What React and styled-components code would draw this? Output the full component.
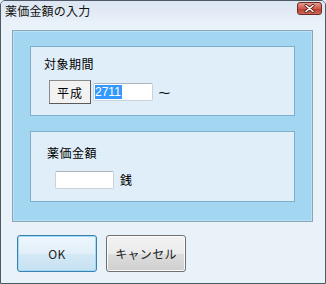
import React from "react";
import styled, { createGlobalStyle } from "styled-components";

const Global = createGlobalStyle`
  html, body { margin: 0; padding: 0; background: #eaf2f9; }
  body { font-family: "Noto Sans CJK JP", "Noto Sans", sans-serif; font-size: 12px; color: #000; }
  * { box-sizing: border-box; }
`;

const Window = styled.div`
  width: 326px;
  height: 284px;
  border: 1px solid #4d5a66;
  border-radius: 5px 5px 0 0;
  background: #eaf2f9;
  display: flex;
  flex-direction: column;
  overflow: hidden;
`;

const TitleBar = styled.div`
  height: 21px;
  flex: none;
  display: flex;
  align-items: center;
  justify-content: space-between;
  padding: 0 3px 0 4px;
  background: linear-gradient(#dbe6f2, #e3ebf5 60%, #e8f0f8);
  font-size: 12px;
  line-height: 14px;
  color: #111;
`;

const Title = styled.span`
  margin-top: -1px;
  letter-spacing: 0.2px;
`;

const CloseButton = styled.div`
  width: 25px;
  height: 13px;
  margin-top: -6px;
  border: 1px solid #6e2a27;
  border-radius: 3px;
  background: linear-gradient(#e59a8f, #cf5a4e 50%, #b93a2e 52%, #cc6a58);
  display: flex;
  align-items: center;
  justify-content: center;
`;

const Body = styled.div`
  flex: 1;
  padding: 8px 12px 0 11px;
  display: flex;
  flex-direction: column;
`;

const Panel = styled.div`
  height: 192px;
  border: 1px solid #8aa6b8;
  box-shadow: inset 0 0 0 1px #b7e2f6;
  background: #a2d6f1;
  padding: 15px 17px 0 17px;
  display: flex;
  flex-direction: column;
  gap: 15px;
`;

const Group = styled.div`
  height: ${(p) => p.$h}px;
  border: 1px solid #7faecb;
  background: #dfeef8;
  padding: ${(p) => p.$pad};
  display: flex;
  flex-direction: column;
`;

const Label = styled.div`
  line-height: 14px;
  font-size: 12px;
  letter-spacing: 0.5px;
`;

const Row = styled.div`
  display: flex;
  align-items: center;
  margin-top: ${(p) => p.$mt}px;
  padding-left: ${(p) => p.$pl}px;
`;

const EraButton = styled.div`
  width: 42px;
  height: 24px;
  border: 1px solid #5b5b5b;
  border-top-color: #8a8a8a;
  border-left-color: #8a8a8a;
  background: #f2f2f2;
  display: flex;
  align-items: center;
  justify-content: center;
  letter-spacing: 1px;
`;

const Input = styled.div`
  width: ${(p) => p.$w}px;
  height: 18px;
  margin-left: ${(p) => p.$ml}px;
  border: 1px solid #c9d3db;
  border-top-color: #abb5be;
  border-radius: 2px;
  background: #fff;
  display: flex;
  align-items: center;
  padding-left: 1px;
`;

const Selected = styled.span`
  background: #3399ff;
  color: #fff;
  font-family: "Liberation Sans", sans-serif;
  font-size: 12px;
  line-height: 14px;
  padding: 0 1px 0 0;
`;

const Suffix = styled.span`
  margin-left: ${(p) => p.$ml}px;
  font-size: 12px;
  line-height: 14px;
`;

const Tilde = styled.span`
  margin-left: 7px;
  margin-top: 2px;
  font-family: "Liberation Sans", sans-serif;
  font-size: 15px;
  line-height: 14px;
  transform: scaleX(1.4);
`;

const Buttons = styled.div`
  display: flex;
  gap: 9px;
  margin-top: 13px;
  padding-left: 5px;
`;

const Button = styled.div`
  width: 80px;
  height: 37px;
  border-radius: 3px;
  border: 1px solid ${(p) => (p.$primary ? "#3c7fb1" : "#707070")};
  box-shadow: inset 0 0 0 1px ${(p) => (p.$primary ? "#9fdcf4" : "#fbfbfb")};
  background: ${(p) =>
    p.$primary
      ? "linear-gradient(#eef6fc, #e2eff8 50%, #d4e9f6 52%, #c6e1f2)"
      : "linear-gradient(#f2f2f2, #ebebeb 50%, #dddddd 52%, #cfcfcf)"};
  display: flex;
  align-items: center;
  justify-content: center;
  font-size: 12px;
  color: #222;
  letter-spacing: 0.3px;
`;

export default function App() {
  return (
    <>
      <Global />
      <Window>
        <TitleBar>
          <Title>薬価金額の入力</Title>
          <CloseButton>
            <svg width="11" height="9" viewBox="0 0 11 9">
              <path d="M2 1.5 L9 7.5 M9 1.5 L2 7.5" stroke="#5a1a16" strokeWidth="3" strokeLinecap="round" />
              <path d="M2 1.5 L9 7.5 M9 1.5 L2 7.5" stroke="#ffffff" strokeWidth="1.6" strokeLinecap="round" />
            </svg>
          </CloseButton>
        </TitleBar>
        <Body>
          <Panel>
            <Group $h={70} $pad="10px 0 0 13px">
              <Label>対象期間</Label>
              <Row $mt={9} $pl={5}>
                <EraButton>平成</EraButton>
                <Input $w={60} $ml={2}>
                  <Selected>2711</Selected>
                </Input>
                <Tilde>~</Tilde>
              </Row>
            </Group>
            <Group $h={71} $pad="14px 0 0 16px">
              <Label>薬価金額</Label>
              <Row $mt={11} $pl={8}>
                <Input $w={59} $ml={0} />
                <Suffix $ml={6}>銭</Suffix>
              </Row>
            </Group>
          </Panel>
          <Buttons>
            <Button $primary>OK</Button>
            <Button>キャンセル</Button>
          </Buttons>
        </Body>
      </Window>
    </>
  );
}
